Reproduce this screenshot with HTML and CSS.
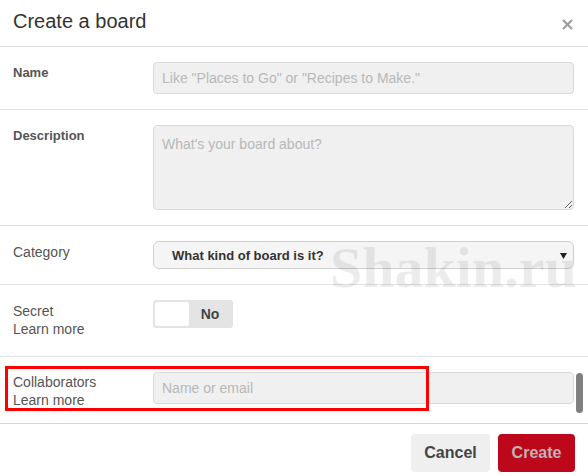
FILE: index.html
```html
<!DOCTYPE html>
<html>
<head>
<meta charset="utf-8">
<link rel="stylesheet" href="styles.css">
</head>
<body>
<div class="modal">
  <div class="header">
    <h1 class="title">Create a board</h1>
    <svg class="close" width="11" height="11" viewBox="0 0 11 11"><path d="M1 1L10 10M10 1L1 10" stroke="#9a9a9a" stroke-width="2" fill="none"/></svg>
  </div>
  <div class="row">
    <div class="label bold">Name</div>
    <input class="field" type="text" placeholder="Like &quot;Places to Go&quot; or &quot;Recipes to Make.&quot;">
  </div>
  <div class="row">
    <div class="label bold">Description</div>
    <textarea class="field area" placeholder="What's your board about?"></textarea>
  </div>
  <div class="row">
    <div class="label">Category</div>
    <div class="select">
      <span>What kind of board is it?</span>
      <svg class="arrow" width="7" height="6" viewBox="0 0 7 6"><path d="M0 0H7L3.5 6Z" fill="#222"/></svg>
    </div>
  </div>
  <div class="row row-secret">
    <div class="label">Secret<br>Learn more</div>
    <div class="toggle"><span class="knob"></span><span class="no">No</span></div>
  </div>
  <div class="row row-collab">
    <div class="label label-collab">Collaborators<br>Learn more</div>
    <input class="field" type="text" placeholder="Name or email">
  </div>
  <div class="footer">
    <button class="btn cancel">Cancel</button>
    <button class="btn create">Create</button>
  </div>
  <div class="watermark">Shakin.ru</div>
  <div class="highlight"></div>
  <div class="scrollbar"></div>
</div>
</body>
</html>
```

FILE: styles.css
```css
* { box-sizing: border-box; }
html, body { margin: 0; padding: 0; background: #fff; }
body { font-family: "Liberation Sans", Arial, sans-serif; color: #555; }
.modal { position: relative; width: 588px; height: 476px; overflow: hidden; }
.header {
  height: 47px;
  border-bottom: 1px solid #e3e3e3;
  display: flex;
  align-items: flex-start;
  justify-content: space-between;
  padding: 9px 15px 0 13px;
}
.title { margin: 0; font-size: 20px; line-height: 24px; font-weight: normal; color: #333; }
.close { margin-top: 10px; }
.row {
  display: grid;
  grid-template-columns: 140px 421px;
  padding: 15px 0 15px 13px;
  border-bottom: 1px solid #e3e3e3;
  align-items: start;
}
.row-secret { padding-bottom: 18px; }
.row-collab { padding-bottom: 14px; border-bottom-color: #d8d8d8; }
.label { font-size: 14px; line-height: 18px; padding-top: 2px; color: #555; }
.label.bold { font-size: 13px; font-weight: bold; }
.label-collab { padding-top: 1px; }
.field {
  width: 421px;
  height: 32px;
  border: 1px solid #d9d9d9;
  border-radius: 4px;
  background: #f0f0f0;
  font-family: "Liberation Sans", Arial, sans-serif;
  font-size: 14px;
  color: #333;
  padding: 0 8px;
  margin: 0;
  outline: none;
}
.field::placeholder { color: #b8b8b8; }
.area { height: 85px; padding: 9px 8px; line-height: 18px; resize: vertical; display: block; }
.select {
  height: 28px;
  border: 1px solid #cfcfcf;
  border-radius: 6px;
  background: #f5f5f5;
  display: flex;
  align-items: center;
  justify-content: space-between;
  padding: 0 6px 0 18px;
  font-size: 13px;
  font-weight: bold;
  color: #333;
}
.arrow { margin-top: 1px; }
.toggle {
  width: 80px;
  height: 28px;
  border-radius: 3px;
  background: #e4e4e4;
  display: flex;
  align-items: center;
  padding: 2px;
}
.knob { width: 34px; height: 24px; background: #fff; border-radius: 2px; }
.no { flex: 1; text-align: center; font-size: 14px; font-weight: bold; color: #444; }
.footer {
  display: flex;
  justify-content: flex-end;
  gap: 8px;
  padding: 10px 13px 0 0;
}
.btn {
  height: 38px;
  border: none;
  border-radius: 4px;
  font-family: "Liberation Sans", Arial, sans-serif;
  font-size: 16px;
  font-weight: bold;
  padding: 0;
}
.cancel { width: 79px; background: #efefef; color: #444; }
.create { width: 77px; background: #bd081c; color: #c0b3b5; }
.watermark {
  position: absolute;
  left: 330px;
  top: 239px;
  font-family: "Liberation Serif", "Times New Roman", serif;
  font-weight: bold;
  font-size: 58px;
  line-height: 58px;
  color: rgba(0, 0, 0, 0.075);
  pointer-events: none;
}
.highlight {
  position: absolute;
  left: 5px;
  top: 366px;
  width: 424px;
  height: 45px;
  border: 3px solid #ff0000;
  pointer-events: none;
}
.scrollbar {
  position: absolute;
  left: 576px;
  top: 373px;
  width: 7px;
  height: 40px;
  border-radius: 4px;
  background: #808080;
}
```
